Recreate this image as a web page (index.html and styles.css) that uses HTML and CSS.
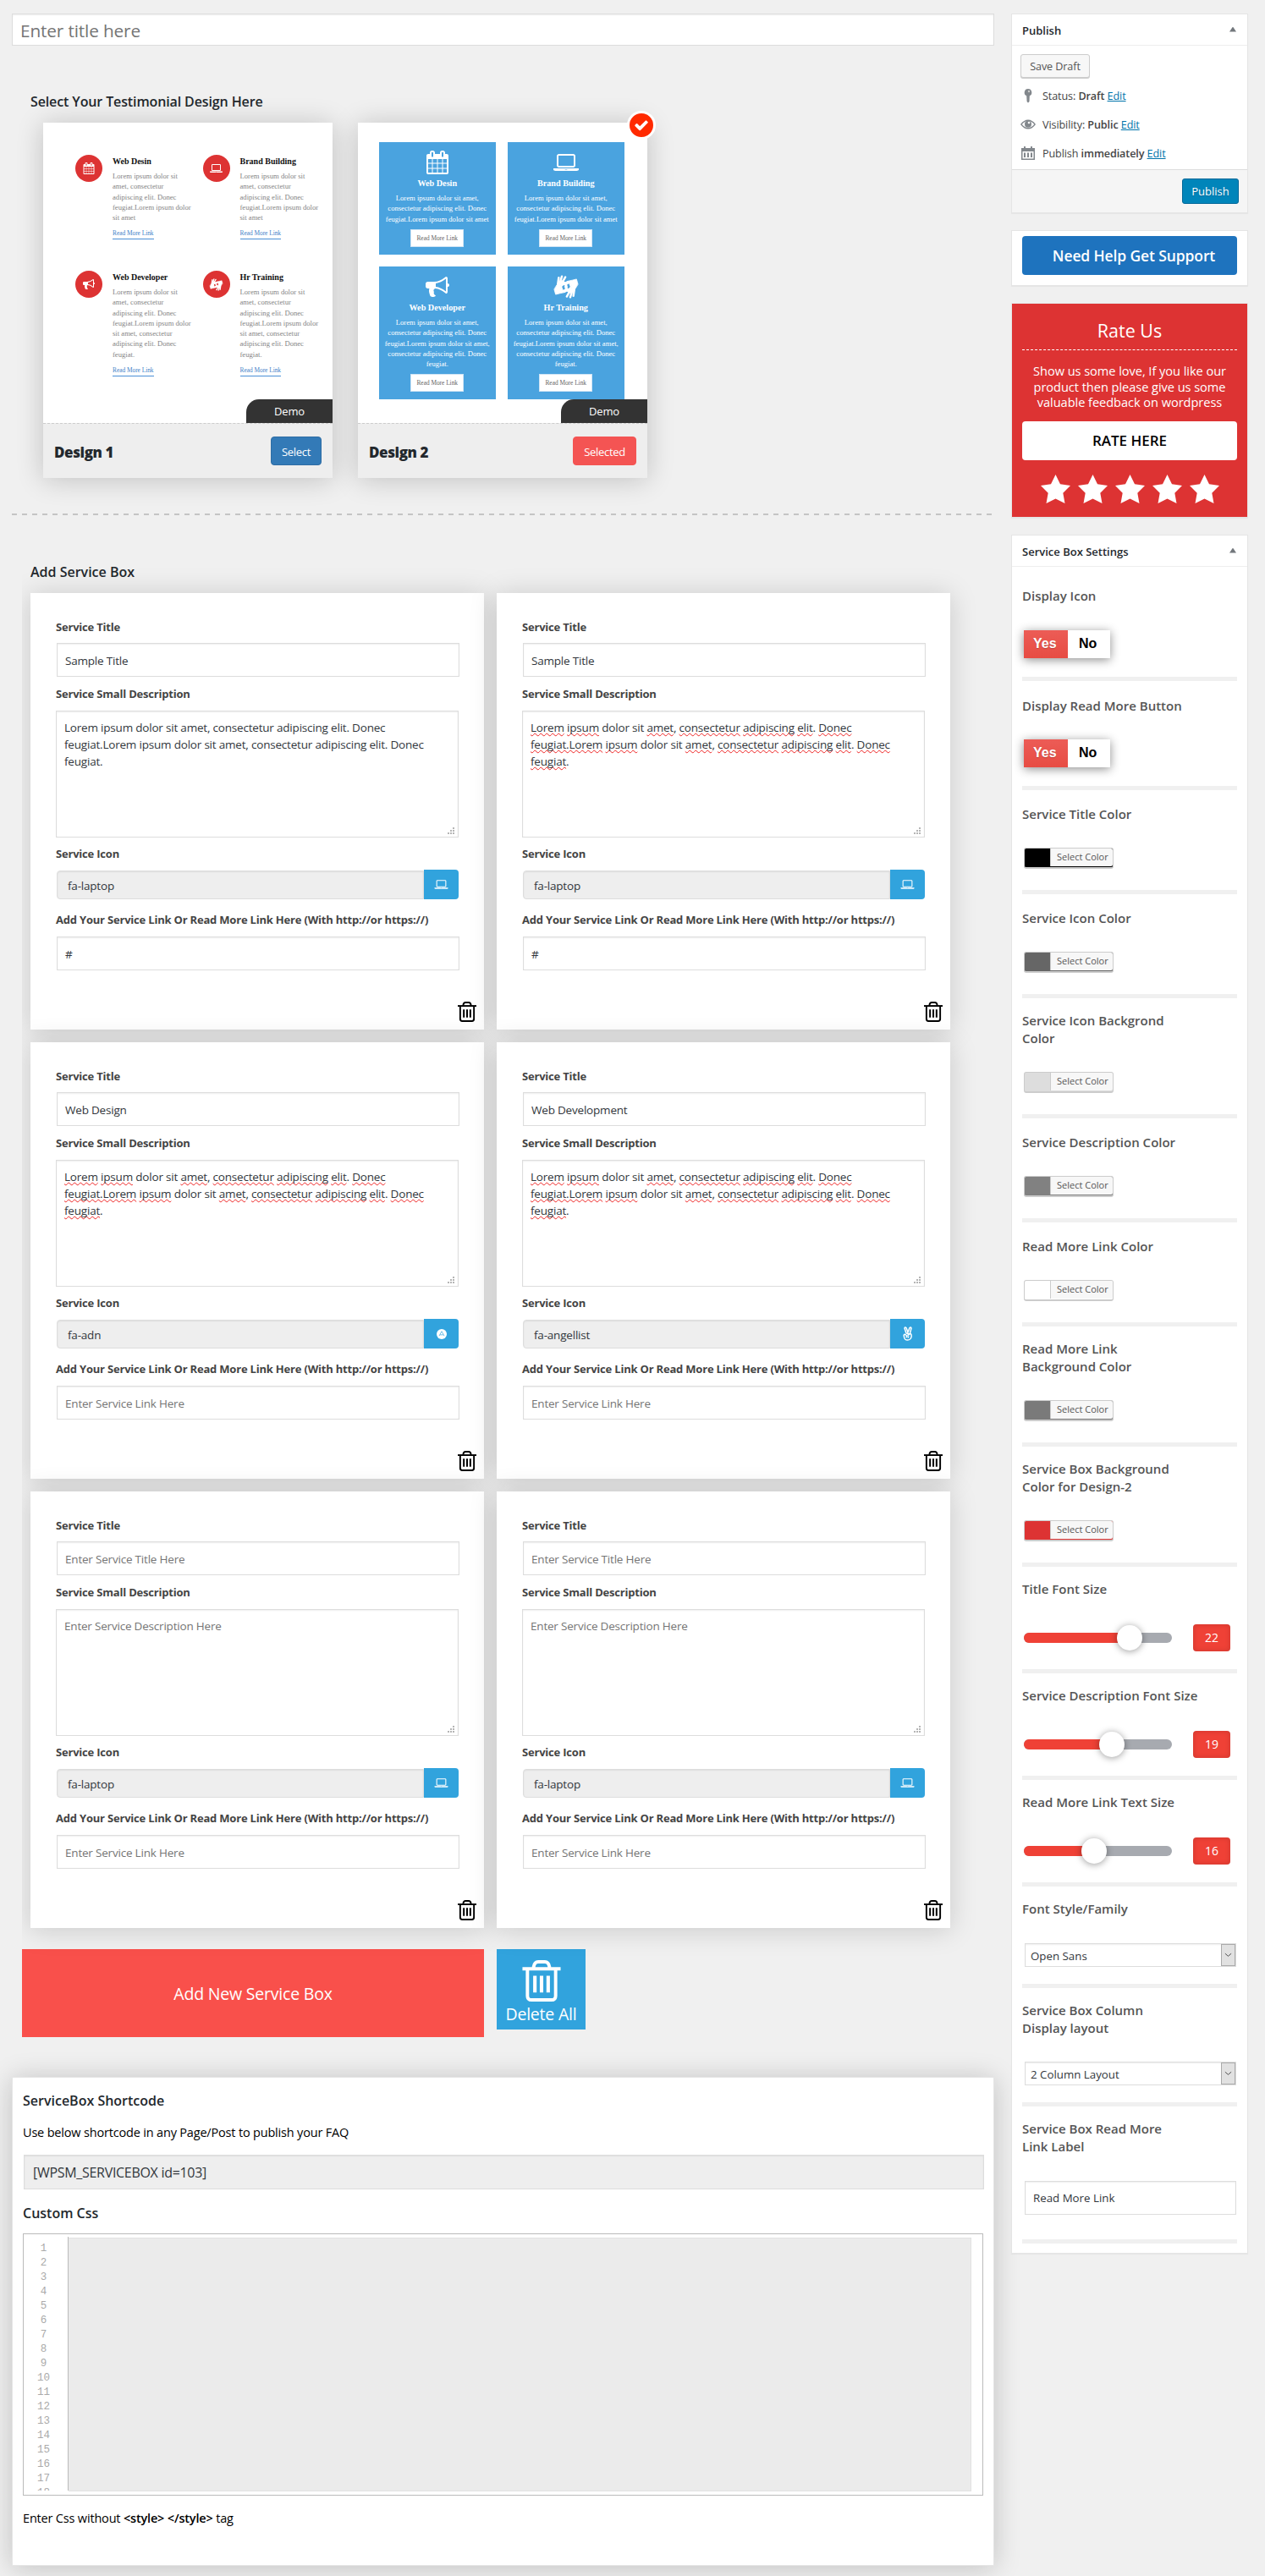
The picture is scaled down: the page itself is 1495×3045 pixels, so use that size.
FILE: index.html
```html
<!DOCTYPE html>
<html lang="en">
<head>
<meta charset="utf-8">
<title>Service Box</title>
<link rel="stylesheet" href="styles.css">
</head>
<body>
<svg class="sprite" aria-hidden="true">
  <symbol id="laptop" viewBox="0 0 1920 1792"><path d="M416 1280q-66 0-113-47t-47-113v-704q0-66 47-113t113-47h1088q66 0 113 47t47 113v704q0 66-47 113t-113 47h-1088zm-32-864v704q0 13 9.500 22.500t22.500 9.500h1088q13 0 22.500-9.500t9.500-22.500v-704q0-13-9.500-22.500t-22.500-9.500h-1088q-13 0-22.500 9.500t-9.500 22.500zm1376 928h160v96q0 40-47 68t-113 28h-1600q-66 0-113-28t-47-68v-96h1760zm-720 96q16 0 16-16t-16-16h-160q-16 0-16 16t16 16h160z"/></symbol>
  <symbol id="calendar" viewBox="0 0 1792 1792"><path d="M192 1664h288v-288h-288v288zm352 0h320v-288h-320v288zm-352-352h288v-320h-288v320zm352 0h320v-320h-320v320zm-352-384h288v-288h-288v288zm736 736h320v-288h-320v288zm-384-736h320v-288h-320v288zm768 736h288v-288h-288v288zm-384-352h320v-320h-320v320zm-352-864v-288q0-13-9.500-22.500t-22.500-9.500h-64q-13 0-22.500 9.500t-9.500 22.500v288q0 13 9.500 22.500t22.500 9.500h64q13 0 22.500-9.500t9.500-22.500zm736 864h288v-320h-288v320zm-384-384h320v-288h-320v288zm384 0h288v-288h-288v288zm32-480v-288q0-13-9.500-22.500t-22.500-9.500h-64q-13 0-22.500 9.500t-9.500 22.500v288q0 13 9.500 22.500t22.500 9.500h64q13 0 22.500-9.500t9.500-22.500zm384-64v1280q0 52-38 90t-90 38h-1408q-52 0-90-38t-38-90v-1280q0-52 38-90t90-38h128v-96q0-66 47-113t113-47h64q66 0 113 47t47 113v96h384v-96q0-66 47-113t113-47h64q66 0 113 47t47 113v96h128q52 0 90 38t38 90z"/></symbol>
  <symbol id="bullhorn" viewBox="0 0 1792 1792"><path d="M1664 640q53 0 90.500 37.500t37.500 90.500-37.500 90.500-90.500 37.500v384q0 52-38 90t-90 38q-417-347-812-380-58 19-91 66t-31 100.500 40 92.500q-20 33-23 65.500t6 58 33.500 55 48 50 61.500 50.500q-29 58-111.500 83t-168.500 11.500-132-55.500q-7-23-29.500-87.500t-32-94.500-23-89-15-101 3.500-98.500 22-110.500h-122q-66 0-113-47t-47-113v-192q0-66 47-113t113-47h480q435 0 896-384 52 0 90 38t38 90v384zm-128 604v-954q-394 302-768 343v270q377 42 768 341z"/></symbol>
  <symbol id="hands" viewBox="0 0 36 34">
    <g id="hand" fill="none" stroke="currentColor" stroke-linecap="round" stroke-linejoin="round">
      <path fill="currentColor" stroke-width="1" d="M1 21 3 28 9 26.500 16 25 18 22 13 21.500 10 19 10.500 15 13 13 16 13.500 19 12 12 8 5 14Z"/>
      <path stroke-width="3" d="M6 14 7.500 4M9 12 12 2M12 12 17 3M13 14 20 10"/>
      <path stroke-width="2.600" d="M15 23.500 17.500 20.500A4 4 0 1 0 12 20"/>
    </g>
    <use href="#hand" transform="rotate(180 18 17)"/>
  </symbol>
  <symbol id="check" viewBox="0 0 1792 1792"><path d="M1671 566q0 40-28 68l-724 724-136 136q-28 28-68 28t-68-28l-136-136-362-362q-28-28-28-68t28-68l136-136q28-28 68-28t68 28l294 295 656-657q28-28 68-28t68 28l136 136q28 28 28 68z"/></symbol>
  <symbol id="trash" viewBox="0 0 46 50"><g fill="none" stroke="currentColor" stroke-width="4" stroke-linejoin="round"><path d="M0 10.500h46"/><path d="M13.500 10V8Q14.500 2 19 2h8q4.500 0 5.500 6v2"/><path d="M6 12v31q0 5 5 5h24q5 0 5-5V12"/><path stroke-width="4.200" d="M15 19v20M23 19v20M31 19v20"/></g></symbol>
  <symbol id="adn" viewBox="0 0 14 14"><circle cx="7" cy="7" r="7"/><path d="M3.500 9.500 7 3.200l3.500 6.300M4.800 8h4.400" fill="none" stroke="#31a3dd" stroke-width=".8"/></symbol>
  <symbol id="angellist" viewBox="0 0 12 17"><g fill="none" stroke="currentColor" stroke-width="1.500" stroke-linejoin="round"><path d="M4 8 2 2Q2.500.300 4 1.500L6 7 8 1.500Q9.500.300 10 2L8.500 8Q10.500 9 10.200 11.500 9.500 16 5.500 16 2 16 1.500 12.500L1.200 10.500Q1.500 9 3 9.500L5 11.500 3.800 13M4 8l4 1-2.500 1.500M7 11.500 6 13.500"/></g></symbol>
  <symbol id="star" viewBox="0 0 35 34"><path d="M17.500 0 23 11.300 35 13l-8.700 8.800L28.500 34 17.500 28.500 6.500 34 8.700 21.800 0 13l12-1.700z"/></symbol>
</svg>

<div class="page">
<main class="main">
  <div class="title-input">Enter title here</div>

  <section class="designs">
    <h2 class="heading">Select Your Testimonial Design Here</h2>
    <div class="design-list">
      <article class="design">
        <div class="preview preview-list">
          <div class="feature"><span class="disc"><svg class="ic14"><use href="#calendar"/></svg></span><div><h4>Web Desin</h4><p>Lorem ipsum dolor sit<br>amet, consectetur<br>adipiscing elit. Donec<br>feugiat.Lorem ipsum dolor<br>sit amet</p><a>Read More Link</a></div></div>
          <div class="feature"><span class="disc"><svg class="ic15"><use href="#laptop"/></svg></span><div><h4>Brand Building</h4><p>Lorem ipsum dolor sit<br>amet, consectetur<br>adipiscing elit. Donec<br>feugiat.Lorem ipsum dolor<br>sit amet</p><a>Read More Link</a></div></div>
          <div class="feature"><span class="disc"><svg class="ic14"><use href="#bullhorn"/></svg></span><div><h4>Web Developer</h4><p>Lorem ipsum dolor sit<br>amet, consectetur<br>adipiscing elit. Donec<br>feugiat.Lorem ipsum dolor<br>sit amet, consectetur<br>adipiscing elit. Donec<br>feugiat.</p><a>Read More Link</a></div></div>
          <div class="feature"><span class="disc"><svg class="ic17"><use href="#hands"/></svg></span><div><h4>Hr Training</h4><p>Lorem ipsum dolor sit<br>amet, consectetur<br>adipiscing elit. Donec<br>feugiat.Lorem ipsum dolor<br>sit amet, consectetur<br>adipiscing elit. Donec<br>feugiat.</p><a>Read More Link</a></div></div>
          <span class="demo">Demo</span>
        </div>
        <footer class="design-foot"><strong>Design 1</strong><span class="btn btn-blue">Select</span></footer>
      </article>
      <article class="design">
        <span class="badge"><svg><use href="#check"/></svg></span>
        <div class="preview preview-tiles">
          <div class="tile"><svg class="tile-icon"><use href="#calendar"/></svg><h4>Web Desin</h4><p>Lorem ipsum dolor sit amet,<br>consectetur adipiscing elit. Donec<br>feugiat.Lorem ipsum dolor sit amet</p><a>Read More Link</a></div>
          <div class="tile"><svg class="tile-icon"><use href="#laptop"/></svg><h4>Brand Building</h4><p>Lorem ipsum dolor sit amet,<br>consectetur adipiscing elit. Donec<br>feugiat.Lorem ipsum dolor sit amet</p><a>Read More Link</a></div>
          <div class="tile"><svg class="tile-icon"><use href="#bullhorn"/></svg><h4>Web Developer</h4><p>Lorem ipsum dolor sit amet,<br>consectetur adipiscing elit. Donec<br>feugiat.Lorem ipsum dolor sit amet,<br>consectetur adipiscing elit. Donec<br>feugiat.</p><a>Read More Link</a></div>
          <div class="tile"><svg class="tile-icon tile-hands"><use href="#hands"/></svg><h4>Hr Training</h4><p>Lorem ipsum dolor sit amet,<br>consectetur adipiscing elit. Donec<br>feugiat.Lorem ipsum dolor sit amet,<br>consectetur adipiscing elit. Donec<br>feugiat.</p><a>Read More Link</a></div>
          <span class="demo">Demo</span>
        </div>
        <footer class="design-foot"><strong>Design 2</strong><span class="btn btn-red">Selected</span></footer>
      </article>
    </div>
  </section>

  <section class="services">
    <h2 class="heading">Add Service Box</h2>
    <div class="box-grid">
      <article class="box">
        <label>Service Title</label><div class="input">Sample Title</div>
        <label class="l2">Service Small Description</label><div class="area">Lorem ipsum dolor sit amet, consectetur adipiscing elit. Donec<br>feugiat.Lorem ipsum dolor sit amet, consectetur adipiscing elit. Donec<br>feugiat.<i class="grip"></i></div>
        <label class="l3">Service Icon</label><div class="icon-input"><span>fa-laptop</span><b><svg class="ic17"><use href="#laptop"/></svg></b></div>
        <label class="l4">Add Your Service Link Or Read More Link Here (With http://or https://)</label><div class="input link">#</div>
        <svg class="trash"><use href="#trash"/></svg>
      </article>
      <article class="box">
        <label>Service Title</label><div class="input">Sample Title</div>
        <label class="l2">Service Small Description</label><div class="area"><u>Lorem</u> <u>ipsum</u> dolor sit <u>amet</u>, <u>consectetur</u> <u>adipiscing</u> <u>elit</u>. <u>Donec</u><br><u>feugiat.Lorem</u> <u>ipsum</u> dolor sit <u>amet</u>, <u>consectetur</u> <u>adipiscing</u> <u>elit</u>. <u>Donec</u><br><u>feugiat</u>.<i class="grip"></i></div>
        <label class="l3">Service Icon</label><div class="icon-input"><span>fa-laptop</span><b><svg class="ic17"><use href="#laptop"/></svg></b></div>
        <label class="l4">Add Your Service Link Or Read More Link Here (With http://or https://)</label><div class="input link">#</div>
        <svg class="trash"><use href="#trash"/></svg>
      </article>
      <article class="box">
        <label>Service Title</label><div class="input">Web Design</div>
        <label class="l2">Service Small Description</label><div class="area"><u>Lorem</u> <u>ipsum</u> dolor sit <u>amet</u>, <u>consectetur</u> <u>adipiscing</u> <u>elit</u>. <u>Donec</u><br><u>feugiat.Lorem</u> <u>ipsum</u> dolor sit <u>amet</u>, <u>consectetur</u> <u>adipiscing</u> <u>elit</u>. <u>Donec</u><br><u>feugiat</u>.<i class="grip"></i></div>
        <label class="l3">Service Icon</label><div class="icon-input"><span>fa-adn</span><b><svg class="ic-adn"><use href="#adn"/></svg></b></div>
        <label class="l4">Add Your Service Link Or Read More Link Here (With http://or https://)</label><div class="input link empty">Enter Service Link Here</div>
        <svg class="trash"><use href="#trash"/></svg>
      </article>
      <article class="box">
        <label>Service Title</label><div class="input">Web Development</div>
        <label class="l2">Service Small Description</label><div class="area"><u>Lorem</u> <u>ipsum</u> dolor sit <u>amet</u>, <u>consectetur</u> <u>adipiscing</u> <u>elit</u>. <u>Donec</u><br><u>feugiat.Lorem</u> <u>ipsum</u> dolor sit <u>amet</u>, <u>consectetur</u> <u>adipiscing</u> <u>elit</u>. <u>Donec</u><br><u>feugiat</u>.<i class="grip"></i></div>
        <label class="l3">Service Icon</label><div class="icon-input"><span>fa-angellist</span><b><svg class="ic-angel"><use href="#angellist"/></svg></b></div>
        <label class="l4">Add Your Service Link Or Read More Link Here (With http://or https://)</label><div class="input link empty">Enter Service Link Here</div>
        <svg class="trash"><use href="#trash"/></svg>
      </article>
      <article class="box">
        <label>Service Title</label><div class="input empty">Enter Service Title Here</div>
        <label class="l2">Service Small Description</label><div class="area empty">Enter Service Description Here<i class="grip"></i></div>
        <label class="l3">Service Icon</label><div class="icon-input"><span>fa-laptop</span><b><svg class="ic17"><use href="#laptop"/></svg></b></div>
        <label class="l4">Add Your Service Link Or Read More Link Here (With http://or https://)</label><div class="input link empty">Enter Service Link Here</div>
        <svg class="trash"><use href="#trash"/></svg>
      </article>
      <article class="box">
        <label>Service Title</label><div class="input empty">Enter Service Title Here</div>
        <label class="l2">Service Small Description</label><div class="area empty">Enter Service Description Here<i class="grip"></i></div>
        <label class="l3">Service Icon</label><div class="icon-input"><span>fa-laptop</span><b><svg class="ic17"><use href="#laptop"/></svg></b></div>
        <label class="l4">Add Your Service Link Or Read More Link Here (With http://or https://)</label><div class="input link empty">Enter Service Link Here</div>
        <svg class="trash"><use href="#trash"/></svg>
      </article>
    </div>
    <div class="actions">
      <div class="add-new">Add New Service Box</div>
      <div class="delete-all"><svg><use href="#trash"/></svg>Delete All</div>
    </div>
  </section>

  <section class="shortcode">
    <h2>ServiceBox Shortcode</h2>
    <p>Use below shortcode in any Page/Post to publish your FAQ</p>
    <div class="code-input">[WPSM_SERVICEBOX id=103]</div>
    <h2>Custom Css</h2>
    <div class="editor">
      <ol class="lines"><li>1</li><li>2</li><li>3</li><li>4</li><li>5</li><li>6</li><li>7</li><li>8</li><li>9</li><li>10</li><li>11</li><li>12</li><li>13</li><li>14</li><li>15</li><li>16</li><li>17</li><li>18</li></ol>
      <div class="editor-area"></div>
    </div>
    <p>Enter Css without <b>&lt;style&gt; &lt;/style&gt;</b> tag</p>
  </section>
</main>

<aside class="side">
  <section class="panel">
    <header class="panel-head">Publish<i class="arrow"></i></header>
    <div class="publish-body">
      <span class="draft">Save Draft</span>
      <div class="line"><svg viewBox="0 0 18 18"><path d="M9 1a4.300 4.300 0 0 1 1.800 8.200L10.500 16 9 17.500 7.600 16 7.200 9.200A4.300 4.300 0 0 1 9 1z"/><circle cx="10" cy="4" r="1.200" fill="#ccc"/></svg>Status:&nbsp;<b>Draft</b>&nbsp;<a>Edit</a></div>
      <div class="line"><svg viewBox="0 0 18 18"><path fill-rule="evenodd" d="M0 9Q4 3.500 9 3.500T18 9Q14 14.500 9 14.500T0 9zm1.800 0Q5 13 9 13t7.200-4Q13 5 9 5T1.800 9z"/><circle cx="9" cy="8.800" r="4"/><circle cx="10" cy="7" r="1.300" fill="#fff"/></svg>Visibility:&nbsp;<b>Public</b>&nbsp;<a>Edit</a></div>
      <div class="line"><svg viewBox="0 0 18 18"><path fill-rule="evenodd" d="M1 3h3V1.500q1-1.500 2 0V3h6V1.500q1-1.500 2 0V3h3v14H1zm1.500 4v8.500h13V7zM4 8.500h2V14H4zm4 0h2V14H8zm4 0h2V14h-2z"/></svg>Publish&nbsp;<b>immediately</b>&nbsp;<a>Edit</a></div>
    </div>
    <footer class="publish-foot"><span>Publish</span></footer>
  </section>

  <section class="panel support"><span>Need Help Get Support</span></section>

  <section class="panel rate">
    <h3>Rate Us</h3>
    <p>Show us some love, If you like our<br>product then please give us some<br>valuable feedback on wordpress</p>
    <span class="rate-btn">RATE HERE</span>
    <div class="stars"><svg><use href="#star"/></svg><svg><use href="#star"/></svg><svg><use href="#star"/></svg><svg><use href="#star"/></svg><svg><use href="#star"/></svg></div>
  </section>

  <section class="panel settings">
    <header class="panel-head">Service Box Settings<i class="arrow"></i></header>
    <div class="row r-first"><h4>Display Icon</h4><div class="toggle"><b>Yes</b><span>No</span></div></div>
    <div class="row r-toggle"><h4>Display Read More Button</h4><div class="toggle"><b>Yes</b><span>No</span></div></div>
    <div class="row r-color"><h4>Service Title Color</h4><div class="color black"><span>Select Color</span></div></div>
    <div class="row r-color"><h4>Service Icon Color</h4><div class="color grey6"><span>Select Color</span></div></div>
    <div class="row r-color2"><h4>Service Icon Backgrond<br>Color</h4><div class="color light"><span>Select Color</span></div></div>
    <div class="row r-color"><h4>Service Description Color</h4><div class="color grey8"><span>Select Color</span></div></div>
    <div class="row r-color"><h4>Read More Link Color</h4><div class="color white"><span>Select Color</span></div></div>
    <div class="row r-color2"><h4>Read More Link<br>Background Color</h4><div class="color grey7"><span>Select Color</span></div></div>
    <div class="row r-color2"><h4>Service Box Background<br>Color for Design-2</h4><div class="color red"><span>Select Color</span></div></div>
    <div class="row r-slider"><h4>Title Font Size</h4><div class="slider"><div class="track"><i style="width:125px"></i></div><output>22</output></div></div>
    <div class="row r-slider"><h4>Service Description Font Size</h4><div class="slider"><div class="track"><i style="width:104px"></i></div><output>19</output></div></div>
    <div class="row r-slider"><h4>Read More Link Text Size</h4><div class="slider"><div class="track"><i style="width:83px"></i></div><output>16</output></div></div>
    <div class="row r-select"><h4>Font Style/Family</h4><div class="select"><span>Open Sans</span><i><svg viewBox="0 0 10 6"><path d="M1 1l4 3.500L9 1"/></svg></i></div></div>
    <div class="row r-select2"><h4>Service Box Column<br>Display layout</h4><div class="select"><span>2 Column Layout</span><i><svg viewBox="0 0 10 6"><path d="M1 1l4 3.500L9 1"/></svg></i></div></div>
    <div class="row r-text"><h4>Service Box Read More<br>Link Label</h4><div class="text">Read More Link</div></div>
  </section>
</aside>
</div>
</body>
</html>
```
FILE: styles.css
```css
* { box-sizing: border-box; }
body { margin: 0; background: #f0f0f0; color: #444; font-family: "Open Sans", sans-serif; font-size: 13px; }
h2, h3, h4, p, ol { margin: 0; padding: 0; font-weight: inherit; font-size: inherit; }
svg { display: block; fill: currentColor; flex: none; }
i { font-style: normal; }
.sprite { position: absolute; width: 0; height: 0; }

.page { display: flex; align-items: flex-start; gap: 20px; height: 3045px; padding: 16px 20px 0 14px; overflow: hidden; }
.main { width: 1161px; flex: none; }
.side { width: 280px; flex: none; }

.title-input { height: 38px; padding-left: 9px; background: #fff; border: 1px solid #ddd; box-shadow: inset 0 1px 2px rgba(0,0,0,.07); color: #757575; font-size: 20.800px; line-height: 38px; letter-spacing: -.15px; }
.heading { padding-left: 22px; color: #23282d; font-size: 16px; font-weight: 600; line-height: 24px; letter-spacing: -.12px; }

/* Design picker */
.designs { height: 555px; padding-top: 54px; background: repeating-linear-gradient(90deg, #c4c4c4 0 6px, transparent 6px 12px) left bottom / 100% 2px no-repeat; }
.design-list { display: flex; gap: 30px; padding: 13px 0 0 37px; }
.design { position: relative; width: 342px; box-shadow: 0 2px 30px rgba(0,0,0,.2); }
.preview { position: relative; height: 355px; background: #fff; font-family: "Liberation Serif", serif; }
.preview h4 { font-size: 10px; font-weight: 700; line-height: 12px; }
.preview p { font-size: 8.650px; line-height: 12.300px; }
.preview-list { display: grid; grid-template: 137px 160px / 150.500px 150px; padding: 38px 0 0 38px; }
.feature { display: flex; gap: 12px; }
.feature h4 { margin: 2px 0 5px; color: #111; }
.feature p { margin-bottom: 7px; color: #858585; white-space: nowrap; }
.feature a { display: inline-block; border-bottom: 1px solid #4a8fd6; color: #3f7fc8; font-size: 7.350px; line-height: 12px; vertical-align: top; }
.disc { display: flex; flex: none; align-items: center; justify-content: center; width: 32px; height: 32px; border-radius: 50%; background: #dd3333; color: #fff; }
.ic14 { width: 14px; height: 14px; }
.ic15 { width: 15px; height: 14px; }
.ic17 { width: 17px; height: 15px; }
.preview-tiles { display: grid; grid-template: 133px 157px / 138.500px 138.500px; gap: 14px 13.500px; padding: 23px 0 0 24.500px; }
.tile { display: flex; flex-direction: column; align-items: center; padding-top: 10px; background: #4aa3df; color: #fff; text-align: center; }
.tile-icon { width: 30px; height: 28px; }
.tile-hands { width: 36px; }
.tile h4 { margin: 5px 0 5px; font-size: 10.200px; }
.tile p { margin-bottom: 6px; white-space: nowrap; }
.tile a { padding: 0 6px; background: #fff; border: 1px solid #cfe4f5; color: #666; font-size: 7.350px; line-height: 19px; }
.demo { position: absolute; right: 0; bottom: 0; width: 102px; height: 28px; border-top-left-radius: 15px; background: #333; color: #fff; font: 13px/28px "Open Sans", sans-serif; letter-spacing: -.2px; text-align: center; }
.design-foot { display: flex; align-items: center; justify-content: space-between; height: 65px; padding: 0 13px; background: #eee; border-top: 1px dashed #ccc; }
.design-foot strong { color: #23282d; font-size: 17px; font-weight: 800; letter-spacing: -.4px; line-height: 24px; padding-top: 4px; }
.btn { height: 34px; padding: 0 12px; border: 1px solid; border-radius: 4px; color: #fff; font-size: 13px; line-height: 34px; letter-spacing: -.3px; }
.btn-blue { background: #337ab7; border-color: #2e6da4; }
.btn-red { background: #f45453; border-color: #f45453; }
.badge { position: absolute; z-index: 1; top: -14px; right: -10px; display: flex; align-items: center; justify-content: center; width: 34px; height: 34px; border: 3px solid #fff; border-radius: 50%; background: #ff2a00; color: #fff; }
.badge svg { width: 18px; height: 18px; }

/* Service boxes */
.services { margin-left: 12px; padding-top: 55px; overflow-x: clip; }
.services .heading { padding-left: 10px; letter-spacing: 0; }
.box-grid { display: grid; grid-template-columns: 536px 536px; gap: 15px; padding: 13px 0 0 10px; }
.box { position: relative; height: 516px; padding: 30px; background: #fff; box-shadow: 0 2px 30px rgba(0,0,0,.17); }
.box label { display: block; height: 20px; color: #444; font-size: 13px; font-weight: 700; line-height: 20px; letter-spacing: -.2px; white-space: nowrap; }
.box .l2 { margin-top: 10px; }
.box .l3 { margin-top: 9px; }
.box .l4 { margin-top: 14px; }
.input, .area, .icon-input span { border: 1px solid #ddd; box-shadow: inset 0 1px 2px rgba(0,0,0,.07); color: #32373c; font-size: 13.500px; letter-spacing: -.2px; }
.input { width: 476px; height: 40px; margin: 9px 0 0 1px; padding-left: 9px; line-height: 41px; }
.link { margin-top: 10px; }
.area { position: relative; width: 476px; height: 150px; margin-top: 10px; padding: 9px 9px; line-height: 20px; white-space: nowrap; }
.input.empty, .area.empty { color: #757575; }
.area u { text-decoration: underline wavy #e22 1px; text-decoration-skip-ink: none; text-underline-offset: 1px; }
.grip { position: absolute; right: 3px; bottom: 2px; width: 9px; height: 9px; background: conic-gradient(#b5b5b5 0 0) 6px 0 / 2px 2px no-repeat, conic-gradient(#b5b5b5 0 0) 3px 3px / 2px 2px no-repeat, conic-gradient(#b5b5b5 0 0) 6px 3px / 2px 2px no-repeat, conic-gradient(#b5b5b5 0 0) 0 6px / 2px 2px no-repeat, conic-gradient(#b5b5b5 0 0) 3px 6px / 2px 2px no-repeat, conic-gradient(#b5b5b5 0 0) 6px 6px / 2px 2px no-repeat; }
.icon-input { display: flex; width: 476px; height: 35px; margin-top: 9px; }
.icon-input span { flex: 1; height: 34px; margin: 1px 0 0 1px; padding-left: 12px; border-radius: 4px 0 0 4px; background: #eee; line-height: 34px; }
.icon-input b { display: flex; align-items: center; justify-content: center; width: 41px; border-radius: 0 4px 4px 0; background: #31a3dd; color: #fff; }
.ic-adn { width: 12px; height: 14px; }
.ic-angel { width: 12px; height: 17px; }
.trash { position: absolute; right: 9px; bottom: 9px; width: 22px; height: 24px; color: #000; }
.actions { display: flex; align-items: flex-start; gap: 15px; padding-top: 25px; color: #fff; font-size: 19.500px; letter-spacing: -.2px; }
.add-new { width: 546px; height: 104px; background: #f9504b; line-height: 106px; text-align: center; }
.delete-all { display: flex; flex-direction: column; align-items: center; width: 105px; height: 95px; padding-top: 13px; background: #31a3dd; line-height: 30px; }
.delete-all svg { width: 46px; height: 49px; }

/* Shortcode and custom css */
.shortcode { width: 1161px; height: 578px; margin-top: 47px; padding: 15px 12px; background: #fff; border: 1px solid #e5e5e5; box-shadow: 0 2px 30px rgba(0,0,0,.2); color: #000; font-size: 14.500px; letter-spacing: -.18px; line-height: 24px; }
.shortcode h2 { color: #23282d; font-size: 16px; font-weight: 600; letter-spacing: 0; }
.shortcode p { margin-top: 14px; }
.shortcode p b { font-weight: 600; }
.code-input { height: 41px; margin: 14px -1px 16px 1px; padding-left: 10px; border: 1px solid #ddd; box-shadow: inset 0 1px 2px rgba(0,0,0,.07); background: #eee; color: #32373c; font-size: 16px; line-height: 41px; letter-spacing: -.3px; }
.editor { display: flex; height: 310px; margin-top: 12px; padding: 3px 13px 4px 0; border: 1px solid #bbb; }
.shortcode .editor + p { margin-top: 15px; }
.lines { width: 53px; height: 300px; padding: 6px 5px 0 0; overflow: hidden; border-right: 1px solid #bbb; color: #aaa; font: 12.500px/17px "Liberation Mono", monospace; letter-spacing: 0; text-align: center; list-style: none; }
.editor-area { flex: 1; margin-top: 1px; background: #ebebeb; border: 1px solid #e2e2e2; border-left: 0; }

/* Sidebar */
.panel { margin-bottom: 20px; background: #fff; border: 1px solid #e5e5e5; box-shadow: 0 1px 1px rgba(0,0,0,.04); }
.panel-head { display: flex; align-items: center; justify-content: space-between; height: 37px; padding: 2px 13px 0 12px; border-bottom: 1px solid #eee; color: #23282d; font-size: 13px; font-weight: 600; }
.arrow { width: 8px; height: 6px; margin-bottom: 3px; background: #72777c; clip-path: polygon(50% 0, 100% 100%, 0 100%); }
.publish-body { height: 146px; padding: 10px; color: #444; font-size: 12.600px; letter-spacing: -.1px; }
.draft { display: block; width: 82px; height: 28px; margin-bottom: 4px; border: 1px solid #ccc; border-radius: 3px; box-shadow: 0 1px 0 #ccc; background: #f7f7f7; color: #555; line-height: 27px; text-align: center; }
.line { display: flex; align-items: center; height: 34px; }
.line svg { width: 18px; height: 18px; margin-right: 8px; color: #82878c; }
.line b { font-weight: 600; }
.line a { color: #0073aa; text-decoration: underline; }
.publish-foot { display: flex; justify-content: flex-end; height: 51px; padding: 10px; border-top: 1px solid #ddd; background: #f5f5f5; }
.publish-foot span { width: 67px; height: 30px; border: 1px solid #006799; border-radius: 3px; background: #0085ba; color: #fff; line-height: 28px; text-align: center; text-shadow: 0 1px 1px #006799; }
.support { height: 66px; padding: 6px 12px; }
.support span { display: block; height: 46px; padding-left: 10px; border-radius: 4px; background: #1e73be; color: #fff; font-size: 17.500px; font-weight: 600; line-height: 46px; letter-spacing: -.12px; text-align: center; }
.rate { height: 254px; padding: 17px 12px 0; background: #dd3333; color: #fff; text-align: center; }
.rate h3 { height: 38px; border-bottom: 1px dashed #fff; font-size: 21.500px; line-height: 29px; }
.rate p { padding-top: 15px; font-size: 14.600px; font-weight: 500; line-height: 18.600px; letter-spacing: -.05px; white-space: nowrap; }
.rate-btn { display: block; height: 46px; margin-top: 13px; border-radius: 4px; background: #fff; color: #000; font-size: 17px; font-weight: 600; line-height: 46px; }
.stars { display: flex; justify-content: center; gap: 9px; padding-top: 16px; }
.stars svg { width: 35px; height: 36px; }

.settings { height: 2032px; }
.row { display: flex; flex-direction: column; justify-content: space-between; align-items: flex-start; margin: 0 12px; border-bottom: 5px solid #f0f0f0; }
.row h4 { color: #555; font-size: 15px; font-weight: 600; line-height: 21px; white-space: nowrap; }
.row > div { margin-left: 2px; }
.r-first { height: 135px; padding: 24px 0 22px; }
.r-toggle { height: 129px; padding: 19px 0 22px; }
.r-color { height: 123px; padding: 18px 0 25px; }
.r-color2 { height: 142px; padding: 16px 0 25px; }
.r-slider { height: 126px; padding: 16px 0 21px; }
.r-select { height: 120px; padding: 16px 0 20px; }
.r-select2 { height: 140px; padding: 16px 0 20px; }
.r-text { height: 162px; padding: 16px 0 29px; }
.toggle { display: flex; width: 102px; height: 33px; box-shadow: 0 2px 12px rgba(0,0,0,.45); background: #fff; color: #000; font: 700 16px/31px "Liberation Sans", sans-serif; }
.toggle b { width: 52px; padding-left: 11px; background: linear-gradient(#ec5c56, #e74c43); color: #fff; text-shadow: 0 1px 1px rgba(0,0,0,.2); }
.toggle span { padding-left: 13px; }
.color { width: 106px; height: 25px; padding: 0 0 1px 30px; border: 1px solid #ccc; border-bottom-width: 2px; border-radius: 3px; }
.color span { display: block; height: 21px; padding-left: 7px; border-left: 1px solid #ccc; border-radius: 0 2px 2px 0; background: #f7f7f7; color: #555; font-size: 11px; line-height: 20px; white-space: nowrap; }
.black { background: #000; }
.grey6 { background: #666; }
.light { background: #ddd; }
.grey8 { background: #818181; }
.white { background: #fff; }
.grey7 { background: #7a7a7a; }
.red { background: #dd3333; }
.slider { display: flex; align-items: center; justify-content: space-between; width: 244px; height: 32px; }
.track { width: 175px; height: 12px; border-radius: 6px; background: #a7aab0; }
.track i { position: relative; display: block; height: 12px; border-radius: 6px 0 0 6px; background: #ef4136; }
.track i::after { content: ""; position: absolute; top: -9px; right: -15px; width: 30px; height: 30px; border-radius: 50%; background: #fff; box-shadow: 0 1px 8px rgba(0,0,0,.4); }
.slider output { width: 44px; height: 32px; border-radius: 4px; background: #ef4136; box-shadow: inset 0 0 6px rgba(0,0,0,.15); color: #fff; font-size: 14px; line-height: 32px; text-align: center; }
.select, .text { width: 250px; border: 1px solid #ddd; box-shadow: inset 0 1px 2px rgba(0,0,0,.07); color: #32373c; font-size: 13.300px; }
.row > .select, .row > .text { margin-left: 3px; }
.select { display: flex; justify-content: space-between; height: 28px; padding: 0 0 0 6px; line-height: 28px; }
.select i { display: flex; align-items: center; justify-content: center; width: 17px; height: 26px; border: 1px solid #aaa; background: #e1e1e1; }
.select svg { width: 9px; height: 6px; fill: none; stroke: #444; }
.text { height: 40px; padding-left: 9px; line-height: 39px; }
```
